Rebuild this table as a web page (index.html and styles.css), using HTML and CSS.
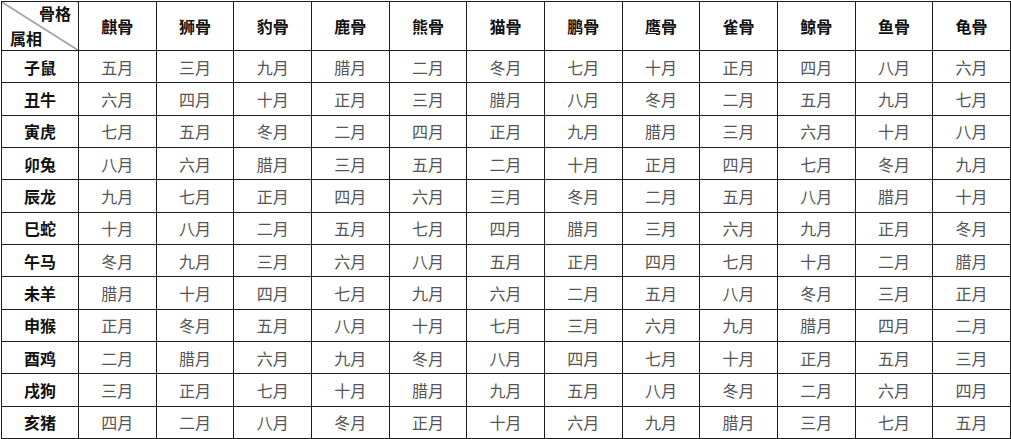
FILE: index.html
```html
<!DOCTYPE html>
<html lang="zh-CN">
<head>
<meta charset="utf-8">
<title>骨格属相表</title>
<link rel="stylesheet" href="styles.css">
</head>
<body>
<table class="grid">
  <colgroup>
    <col class="c-first">
    <col span="12" class="c-data">
  </colgroup>
  <thead>
    <tr class="head-row">
      <th class="corner"><div class="corner-inner"><span class="corner-top">骨格</span><span class="corner-bottom">属相</span></div></th>
      <th>麒骨</th><th>狮骨</th><th>豹骨</th><th>鹿骨</th><th>熊骨</th><th>猫骨</th><th>鹏骨</th><th>鹰骨</th><th>雀骨</th><th>鲸骨</th><th>鱼骨</th><th>龟骨</th>
    </tr>
  </thead>
  <tbody>
    <tr><th>子鼠</th><td>五月</td><td>三月</td><td>九月</td><td>腊月</td><td>二月</td><td>冬月</td><td>七月</td><td>十月</td><td>正月</td><td>四月</td><td>八月</td><td>六月</td></tr>
    <tr><th>丑牛</th><td>六月</td><td>四月</td><td>十月</td><td>正月</td><td>三月</td><td>腊月</td><td>八月</td><td>冬月</td><td>二月</td><td>五月</td><td>九月</td><td>七月</td></tr>
    <tr><th>寅虎</th><td>七月</td><td>五月</td><td>冬月</td><td>二月</td><td>四月</td><td>正月</td><td>九月</td><td>腊月</td><td>三月</td><td>六月</td><td>十月</td><td>八月</td></tr>
    <tr><th>卯兔</th><td>八月</td><td>六月</td><td>腊月</td><td>三月</td><td>五月</td><td>二月</td><td>十月</td><td>正月</td><td>四月</td><td>七月</td><td>冬月</td><td>九月</td></tr>
    <tr><th>辰龙</th><td>九月</td><td>七月</td><td>正月</td><td>四月</td><td>六月</td><td>三月</td><td>冬月</td><td>二月</td><td>五月</td><td>八月</td><td>腊月</td><td>十月</td></tr>
    <tr><th>巳蛇</th><td>十月</td><td>八月</td><td>二月</td><td>五月</td><td>七月</td><td>四月</td><td>腊月</td><td>三月</td><td>六月</td><td>九月</td><td>正月</td><td>冬月</td></tr>
    <tr><th>午马</th><td>冬月</td><td>九月</td><td>三月</td><td>六月</td><td>八月</td><td>五月</td><td>正月</td><td>四月</td><td>七月</td><td>十月</td><td>二月</td><td>腊月</td></tr>
    <tr><th>未羊</th><td>腊月</td><td>十月</td><td>四月</td><td>七月</td><td>九月</td><td>六月</td><td>二月</td><td>五月</td><td>八月</td><td>冬月</td><td>三月</td><td>正月</td></tr>
    <tr><th>申猴</th><td>正月</td><td>冬月</td><td>五月</td><td>八月</td><td>十月</td><td>七月</td><td>三月</td><td>六月</td><td>九月</td><td>腊月</td><td>四月</td><td>二月</td></tr>
    <tr><th>酉鸡</th><td>二月</td><td>腊月</td><td>六月</td><td>九月</td><td>冬月</td><td>八月</td><td>四月</td><td>七月</td><td>十月</td><td>正月</td><td>五月</td><td>三月</td></tr>
    <tr><th>戌狗</th><td>三月</td><td>正月</td><td>七月</td><td>十月</td><td>腊月</td><td>九月</td><td>五月</td><td>八月</td><td>冬月</td><td>二月</td><td>六月</td><td>四月</td></tr>
    <tr><th>亥猪</th><td>四月</td><td>二月</td><td>八月</td><td>冬月</td><td>正月</td><td>十月</td><td>六月</td><td>九月</td><td>腊月</td><td>三月</td><td>七月</td><td>五月</td></tr>
  </tbody>
</table>
</body>
</html>
```

FILE: styles.css
```css
html, body {
  margin: 0;
  padding: 0;
  background: #ffffff;
}

body {
  padding: 1px 0 0 1px;
  font-family: "Noto Sans CJK SC", "Noto Sans", sans-serif;
}

.grid {
  border-collapse: collapse;
  table-layout: fixed;
  width: 1010px;
}

.c-first {
  width: 77px;
}

.grid th,
.grid td {
  border: 1px solid #1e1e1e;
  padding: 0;
  text-align: center;
  vertical-align: middle;
  line-height: 1;
}

.grid th {
  font-weight: 700;
  font-size: 16px;
  color: #111;
}

.grid td {
  font-weight: 400;
  font-size: 16px;
  color: #555;
}

.head-row {
  height: 48px;
}

.grid tbody tr {
  height: 32.33px;
}

.corner {
  background: linear-gradient(to top right, transparent calc(50% - 0.8px), #333 50%, transparent calc(50% + 0.8px));
}

.corner-inner {
  display: flex;
  flex-direction: column;
  height: 48px;
  padding: 3px 7px 4px 8px;
  box-sizing: border-box;
  justify-content: space-between;
}

.corner-top {
  align-self: flex-end;
}

.corner-bottom {
  align-self: flex-start;
}
```
